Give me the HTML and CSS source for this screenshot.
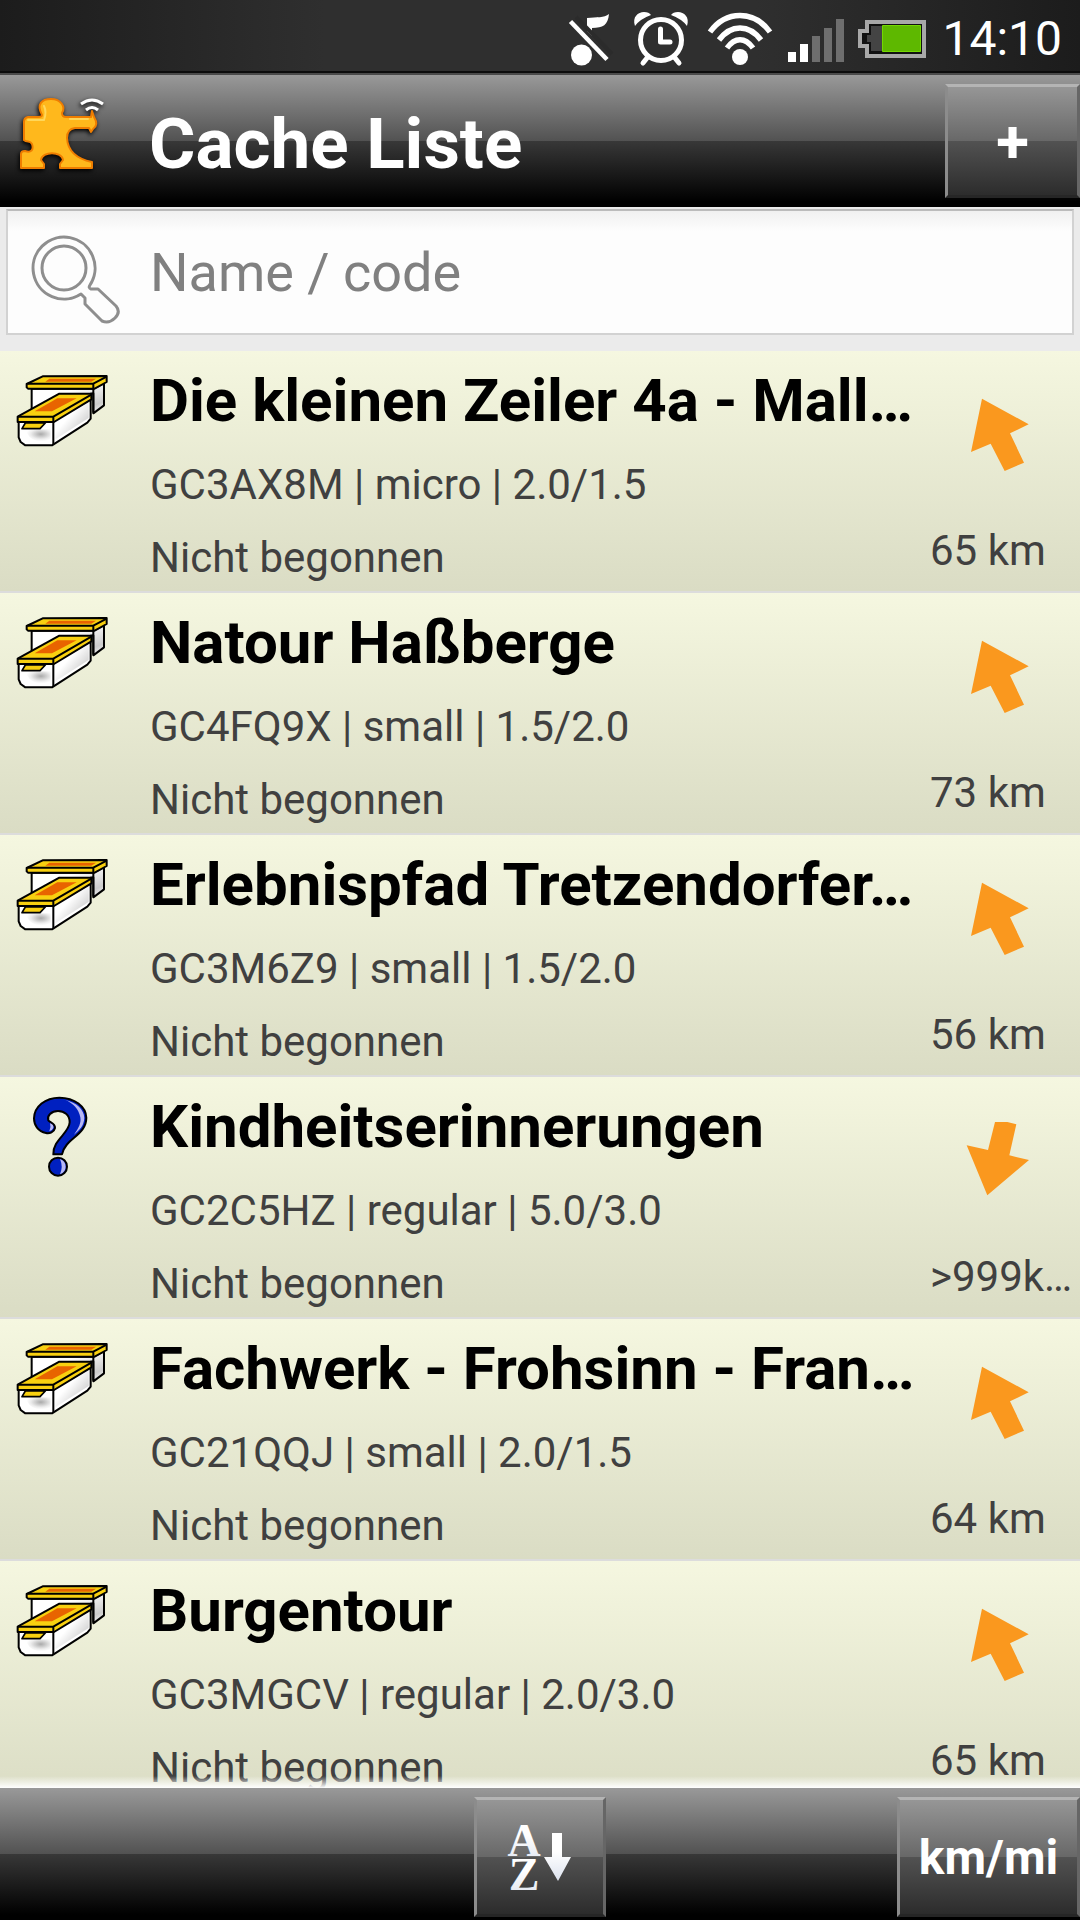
FILE: index.html
```html
<!DOCTYPE html>
<html lang="de">
<head>
<meta charset="utf-8">
<meta name="viewport" content="width=device-width, initial-scale=1">
<title>Cache Liste</title>
<link rel="stylesheet" href="styles.css">
</head>
<body>
<svg class="defs" aria-hidden="true">
  <defs>
    <linearGradient id="side" x1="0" y1="0" x2="1" y2="1"><stop offset="0.4" stop-color="#fff"/><stop offset="0.8" stop-color="#ccc"/><stop offset="1" stop-color="#fff"/></linearGradient>
    <radialGradient id="front" cx="0.6" cy="0.4" r="0.6"><stop offset="0" stop-color="#aaa"/><stop offset="0.7" stop-color="#eee"/><stop offset="1" stop-color="#fff"/></radialGradient>
    <linearGradient id="silver" x1="0" y1="0" x2="0" y2="1"><stop offset="0.4" stop-color="#fff"/><stop offset="1" stop-color="#dce2ee"/></linearGradient>
  </defs>
  <symbol id="box" viewBox="45 60 288 246">
    <g stroke="#000" stroke-width="6" stroke-linejoin="round">
      <path fill="url(#side)" d="M95 116V185L180 150L280 130V190L312 166V100L280 116Z"/>
      <path d="M280 116V188" fill="none"/>
      <path fill="#f8d010" d="M80 102L128 79L320 78V96L284 116H84L80 112Z"/>
      <path d="M82 101H280L320 80M280 101V116" fill="none"/>
      <path fill="#e86400" stroke="none" d="M148 86H288L274 95H136Z"/>
      <path fill="#fff" d="M56 214H160L272 148V206L262 218L156 286H76L62 276L56 262Z"/>
      <path fill="url(#front)" stroke="none" d="M78 238H152V274H110Q82 264 78 238Z"/>
      <path fill="url(#side)" stroke="none" d="M166 216L266 156V204L166 268Z"/>
      <path fill="#f8d010" d="M53 200L178 131H274V148L162 216H53Z"/>
      <path d="M54 200H160L274 134M160 200V282" fill="none"/>
      <path fill="#e86400" stroke="none" d="M104 184L172 145H230L156 184Z"/>
      <path fill="#f8d010" stroke-width="5" d="M76 219H136L120 236H66Z"/>
    </g>
  </symbol>
  <symbol id="mystery" viewBox="45 78 288 246">
    <path fill="#0020c0" stroke="#000" stroke-width="6" stroke-linejoin="round" d="M160 253C158 210 208 190 209 157C209 134 192 123 174 123C154 123 140 138 145 151C150 158 166 160 165 174C162 187 149 191 138 189C114 185 102 165 102 145C103 109 136 83 178 83C224 83 258 110 259 143C259 197 195 205 186 253Z"/>
    <path fill="#b8b8f4" d="M196 90C230 98 252 118 253 144C252 168 238 181 222 194C236 174 244 160 241 142C236 116 220 100 196 90ZM150 160Q162 164 160 174Q156 182 148 184Q154 172 150 160Z"/>
    <circle cx="174" cy="290" r="27" fill="#0020c0" stroke="#000" stroke-width="6"/>
    <path fill="#b8b8f4" d="M180 267Q197 274 197 290Q197 306 180 313Q190 290 180 267Z"/>
  </symbol>
  <symbol id="arrow-up" viewBox="258 132 195 240"><path fill="#fa981e" d="M306 146L446 223L390 250L432 338L374 363L332 281L273 306Z"/></symbol>
  <symbol id="arrow-down" viewBox="198 120 195 240"><path fill="#fa981e" d="M285 126H322L349 133L328 226L387 240L262 346L200 196L264 210Z"/></symbol>
</svg>

<div class="statusbar">
  <svg class="status-icons" viewBox="566 0 364 72" aria-hidden="true">
    <g fill="#fff">
      <path d="M587 17C597 16 604 17 609 13C608 24 603 27 592 27V35L587 30Z"/>
      <circle cx="581.500" cy="54" r="10.500"/>
      <path d="M576 16L612 53" stroke="#2b2b2b" stroke-width="4"/>
      <path d="M570.500 20.500L607 58.500" stroke="#fff" stroke-width="4.500"/>
    </g>
    <g fill="none" stroke="#fff" stroke-width="5" stroke-linecap="round" stroke-linejoin="round">
      <circle cx="661" cy="39" r="20.500"/>
      <path d="M660.500 28V41H670M647 57L643 62M675 57L679 62"/>
    </g>
    <path fill="#fff" d="M635 25C632 16 638 11 644 11Q649 11 651 14Q640 18 635 25ZM687 25C690 16 684 11 678 11Q673 11 671 14Q682 18 687 25Z"/>
    <circle cx="740" cy="56" r="8" fill="#fff"/>
    <g fill="none" stroke="#fff" stroke-width="5.500">
      <path d="M710 31C726 9 754 9 770 31M719 39C731 23 749 23 761 39M727 47C735 36 745 36 753 47"/>
    </g>
    <path fill="#fff" d="M788 51H796V61H788ZM800 43H808V61H800Z"/>
    <path fill="#6e6e6e" d="M812 35H820V61H812ZM824 27H832V61H824ZM836 18H844V61H836Z"/>
    <path fill="#111" stroke="#a8a8a8" stroke-width="4" d="M867 21H924V55H867V45H860V30H867Z"/>
    <path fill="#444" d="M871 25H882V50H871V41H867V34H871Z"/>
    <path fill="#5eb800" stroke="#74d800" stroke-width="1" d="M882.500 24.500H920.500V50.500H882.500Z"/>
  </svg>
  <time class="clock">14:10</time>
</div>

<header class="bar">
  <svg class="logo" viewBox="16 90 92 84" aria-hidden="true">
    <path fill="#ffb81c" stroke="#ef7d00" stroke-width="2" stroke-linejoin="round" d="M42 115C36 104 42 99 51 99C61 99 66 107 62 113Q62 117 66 117H91L92 111L94 117Q99 125 93 129L91 132L89 128H75Q67 129 67 138Q68 157 92 162V168H60V164L63 160C62 151 42 151 41 160L44 164V168H21V154Q21 151 25 151C31 153 34 150 32 144C30 140 27 143 24 140V122Q24 118 28 117H38Q42 117 42 115Z"/>
    <path fill="none" stroke="#ffd75a" stroke-width="2" stroke-linecap="round" d="M28 120H44Q47 112 44 106M70 119H88"/>
    <path fill="none" stroke="#fff" stroke-width="3" d="M81 104Q92 96 103 104M86 110Q92 105 98 110"/>
  </svg>
  <h1 class="title">Cache Liste</h1>
  <button class="bar-button add" type="button">+</button>
</header>

<form class="search">
  <label class="field">
    <svg class="lens" viewBox="30 234 92 92" role="img" aria-label="Suche">
      <g fill="none" stroke="#8e8e8e" stroke-width="3" stroke-linejoin="round">
        <path d="M81 294A31 31 0 1 1 90 285Q88 288 91 289L98 289L116 306Q121 312 115 318Q109 324 102 321L85 304V298Z"/>
        <circle cx="64" cy="268" r="22"/>
      </g>
    </svg>
    <input class="query" type="text" placeholder="Name / code" aria-label="Name / code">
  </label>
</form>

<main class="list-area">
  <ul class="list">
    <li class="cache">
      <svg class="type"><use href="#box"/></svg>
      <div class="info"><h2 class="name">Die kleinen Zeiler 4a - Mall…</h2><p class="meta">GC3AX8M | micro | 2.0/1.5</p><p class="meta">Nicht begonnen</p></div>
      <div class="where"><svg class="arrow"><use href="#arrow-up"/></svg><p class="distance">65 km</p></div>
    </li>
    <li class="cache">
      <svg class="type"><use href="#box"/></svg>
      <div class="info"><h2 class="name">Natour Haßberge</h2><p class="meta">GC4FQ9X | small | 1.5/2.0</p><p class="meta">Nicht begonnen</p></div>
      <div class="where"><svg class="arrow"><use href="#arrow-up"/></svg><p class="distance">73 km</p></div>
    </li>
    <li class="cache">
      <svg class="type"><use href="#box"/></svg>
      <div class="info"><h2 class="name">Erlebnispfad Tretzendorfer…</h2><p class="meta">GC3M6Z9 | small | 1.5/2.0</p><p class="meta">Nicht begonnen</p></div>
      <div class="where"><svg class="arrow"><use href="#arrow-up"/></svg><p class="distance">56 km</p></div>
    </li>
    <li class="cache">
      <svg class="type"><use href="#mystery"/></svg>
      <div class="info"><h2 class="name">Kindheitserinnerungen</h2><p class="meta">GC2C5HZ | regular | 5.0/3.0</p><p class="meta">Nicht begonnen</p></div>
      <div class="where"><svg class="arrow"><use href="#arrow-down"/></svg><p class="distance">&gt;999k…</p></div>
    </li>
    <li class="cache">
      <svg class="type"><use href="#box"/></svg>
      <div class="info"><h2 class="name">Fachwerk - Frohsinn - Fran…</h2><p class="meta">GC21QQJ | small | 2.0/1.5</p><p class="meta">Nicht begonnen</p></div>
      <div class="where"><svg class="arrow"><use href="#arrow-up"/></svg><p class="distance">64 km</p></div>
    </li>
    <li class="cache">
      <svg class="type"><use href="#box"/></svg>
      <div class="info"><h2 class="name">Burgentour</h2><p class="meta">GC3MGCV | regular | 2.0/3.0</p><p class="meta">Nicht begonnen</p></div>
      <div class="where"><svg class="arrow"><use href="#arrow-up"/></svg><p class="distance">65 km</p></div>
    </li>
  </ul>
</main>

<footer class="bar toolbar">
  <button class="bar-button sort" type="button" aria-label="Sortieren">
    <svg class="sort-icon" viewBox="505 1820 68 74" aria-hidden="true">
      <g fill="url(#silver)">
        <text class="sort-letter" x="523" y="1856">A</text>
        <text class="sort-letter" x="523" y="1890">Z</text>
        <path d="M551 1833H561V1857H570L557 1881L543 1857H551Z"/>
      </g>
    </svg>
  </button>
  <button class="bar-button units" type="button">km/mi</button>
</footer>
</body>
</html>
```
FILE: styles.css
```css
* {
  box-sizing: border-box;
  margin: 0;
  padding: 0;
}

body {
  display: flex;
  flex-direction: column;
  height: 100vh;
  overflow: hidden;
  background: #fff;
  font-family: Roboto, "Liberation Sans", sans-serif;
}

.defs {
  position: absolute;
  width: 0;
  height: 0;
}

.statusbar {
  display: flex;
  flex: none;
  align-items: center;
  justify-content: flex-end;
  gap: 12px;
  height: 75px;
  padding-right: 18px;
  border-bottom: 2px solid #4a4a4a;
  background: linear-gradient(90deg, #1c1c1c, #2f2f2f 30%, #2f2f2f 70%, #1c1c1c);
  box-shadow: inset 0 -2px #0c0c0c;
}

.status-icons {
  width: 364px;
  height: 72px;
}

.clock {
  padding-top: 4px;
  color: #fff;
  font-size: 48px;
  line-height: 72px;
}

.bar {
  display: flex;
  flex: none;
  align-items: center;
  height: 132px;
  background: linear-gradient(#999, #525252 50%, #383838 50%, #000 96%);
}

.logo {
  flex: none;
  width: 92px;
  height: 84px;
  margin: 0 41px 18px 16px;
  filter: drop-shadow(-1px 2px 2px #000);
}

.title {
  flex: 1;
  padding-top: 6px;
  color: #fff;
  font-size: 71px;
  line-height: 84px;
}

.bar-button {
  border: 3px solid;
  border-color: #b4b4b4 #666 #262626 #8c8c8c;
  background: linear-gradient(#969696, #686868 50%, #525252 50%, #2c2c2c);
  color: #fff;
  font: bold 48px Roboto, "Liberation Sans", sans-serif;
}

.add {
  width: 135px;
  height: 114px;
  font-size: 60px;
}

.search {
  flex: none;
  height: 144px;
  padding: 2px 6px 16px;
  background: #ebebeb;
}

.field {
  display: flex;
  align-items: center;
  height: 126px;
  padding-left: 22px;
  border: 2px solid #d2d2d2;
  border-top-color: #bbb;
  background: linear-gradient(#f0f0f0, #fdfdfd 20px);
}

.lens {
  flex: none;
  width: 92px;
  height: 92px;
  margin: 16px 28px 0 0;
}

.query {
  flex: 1;
  min-width: 0;
  height: 100%;
  border: 0;
  outline: 0;
  background: none;
  color: #000;
  font: 54px Roboto, "Liberation Sans", sans-serif;
}

.query::placeholder {
  color: #808080;
}

.list-area {
  position: relative;
  flex: 1;
  min-height: 0;
}

.list-area::after {
  content: "";
  position: absolute;
  right: 0;
  bottom: 0;
  left: 0;
  height: 12px;
  background: linear-gradient(rgba(255, 255, 255, 0), #fff);
}

.list {
  height: 100%;
  overflow-y: auto;
  scrollbar-width: none;
  list-style: none;
}

.cache {
  display: grid;
  grid-template-columns: 150px minmax(0, 1fr) 150px;
  height: 242px;
  border-bottom: 2px solid #dcdcdc;
  background: linear-gradient(#f5f7e0, #dadcc4);
}

.type {
  width: 96px;
  height: 82px;
  margin: 19px 0 0 15px;
}

.info {
  padding-top: 14px;
}

.name {
  overflow: hidden;
  margin-bottom: 11px;
  color: #000;
  font-size: 60px;
  line-height: 72px;
  text-overflow: ellipsis;
  white-space: nowrap;
}

.meta,
.distance {
  overflow: hidden;
  color: #404040;
  font-size: 42px;
  line-height: 73px;
  text-overflow: ellipsis;
  white-space: nowrap;
}

.where {
  padding-top: 43px;
}

.arrow {
  display: block;
  width: 65px;
  height: 80px;
  margin: 0 0 40px 36px;
}

.toolbar {
  display: grid;
  grid-template-columns: 1fr 132px 1fr;
  padding-top: 6px;
}

.sort {
  grid-column: 2;
  height: 120px;
}

.sort-icon {
  display: block;
  width: 68px;
  height: 74px;
  margin: 0 auto;
}

.sort-letter {
  font: bold 46px "Liberation Serif", serif;
  text-anchor: middle;
}

.units {
  justify-self: end;
  width: 183px;
  height: 120px;
}
```
